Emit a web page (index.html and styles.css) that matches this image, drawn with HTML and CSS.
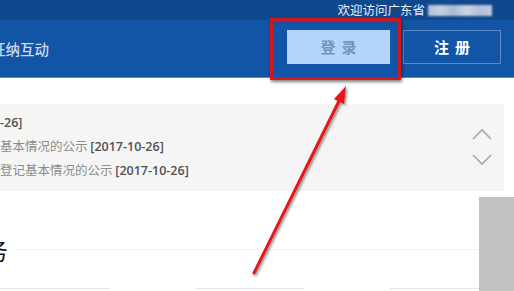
FILE: index.html
```html
<!DOCTYPE html>
<html lang="zh-CN">
<head>
<meta charset="utf-8">
<title>征纳互动</title>
<link rel="stylesheet" href="styles.css">
</head>
<body>
<div class="page">
  <div class="topbar">
    <span class="welcome">欢迎访问广东省</span>
    <span class="blurred"></span>
  </div>
  <div class="nav">
    <span class="nav-title">征纳互动</span>
    <div class="nav-actions">
      <a class="btn btn-login">登录</a>
      <a class="btn btn-register">注册</a>
    </div>
  </div>
  <div class="notice">
    <ul class="notice-list">
      <li><span class="date">-26]</span></li>
      <li>基本情况的公示 <span class="date">[2017-10-26]</span></li>
      <li>登记基本情况的公示 <span class="date">[2017-10-26]</span></li>
    </ul>
    <div class="notice-arrows">
      <svg class="chev" width="20" height="12" viewBox="0 0 20 12"><path d="M1 11 L10 2 L19 11" /></svg>
      <svg class="chev" width="20" height="12" viewBox="0 0 20 12"><path d="M1 1 L10 10 L19 1" /></svg>
    </div>
  </div>
  <div class="section">
    <h2 class="section-title">务</h2>
    <div class="section-rule"></div>
  </div>
  <div class="cards">
    <div class="card"></div>
    <div class="card"></div>
    <div class="card"></div>
  </div>
  <div class="side-block"></div>
  <div class="highlight-box"></div>
  <svg class="annot-arrow" width="514" height="291" viewBox="0 0 514 291">
    <defs>
      <filter id="sh" x="-20%" y="-20%" width="140%" height="140%">
        <feDropShadow dx="1.5" dy="1.5" stdDeviation="1" flood-color="#000" flood-opacity="0.45"/>
      </filter>
    </defs>
    <g filter="url(#sh)">
      <line x1="254" y1="273" x2="340" y2="99" stroke="#e8141c" stroke-width="3" stroke-linecap="round"/>
      <polygon points="346,86 344,104 334,99" fill="#e8141c"/>
    </g>
  </svg>
</div>
</body>
</html>
```

FILE: styles.css
```css
* { box-sizing: border-box; }
html, body { margin: 0; padding: 0; }
body {
  width: 514px;
  height: 291px;
  overflow: hidden;
  background: #ffffff;
  font-family: "Noto Sans CJK SC", "Noto Sans", sans-serif;
}
.page {
  position: relative;
  width: 514px;
  height: 291px;
  overflow: hidden;
}
.topbar {
  height: 20px;
  background: #10488e;
  display: flex;
  align-items: center;
  justify-content: flex-end;
  padding-right: 22px;
}
.welcome {
  color: #e8eef8;
  font-size: 12.5px;
  line-height: 20px;
}
.blurred {
  width: 64px;
  height: 11px;
  margin-left: 3px;
  background: linear-gradient(90deg, #aebfd8 0%, #c6d0e0 20%, #a9bad4 40%, #cdd5e3 60%, #b2c1d9 80%, #c0cbdd 100%);
  filter: blur(1px);
}
.nav {
  height: 58px;
  background: #1254a5;
  border-bottom: 1px solid #5d87c0;
  display: flex;
  align-items: center;
  justify-content: space-between;
  padding-right: 13px;
}
.nav-title {
  margin-left: -9px;
  color: #cdd9ec;
  font-size: 14.5px;
  font-weight: 500;
}
.nav-actions {
  display: flex;
  gap: 13px;
  margin-top: -4px;
}
.btn {
  display: flex;
  align-items: center;
  justify-content: center;
  height: 34px;
  font-size: 15px;
  font-weight: 700;
  letter-spacing: 6px;
  text-indent: 6px;
}
.btn-login {
  width: 103px;
  background: #b4d5fb;
  color: #7592c0;
}
.btn-register {
  width: 98px;
  border: 1px solid #5a87c6;
  color: #ffffff;
}
.notice {
  margin-top: 26px;
  width: 504px;
  height: 87px;
  background: #f5f5f5;
  display: flex;
  justify-content: space-between;
  padding-right: 12px;
}
.notice-list {
  list-style: none;
  margin: 0;
  padding: 6px 0 0 0;
}
.notice-list li {
  height: 24px;
  line-height: 24px;
  font-size: 12.5px;
  color: #8c8c8c;
  white-space: nowrap;
}
.date {
  color: #505050;
  font-family: "Open Sans", "Noto Sans", sans-serif;
  font-weight: 600;
  font-size: 12.5px;
}
.notice-arrows {
  display: flex;
  flex-direction: column;
  gap: 14px;
  padding-top: 24px;
}
.chev path {
  fill: none;
  stroke: #a9a9a9;
  stroke-width: 1.6;
}
.section {
  display: flex;
  align-items: center;
  height: 97px;
  padding-top: 20px;
  padding-right: 36px;
}
.section-title {
  margin: 0 7px 0 -16px;
  font-size: 24px;
  font-weight: 400;
  line-height: 26px;
  color: #111111;
}
.section-rule {
  flex: 1;
  height: 1px;
  background: #f1f1f1;
}
.cards {
  display: flex;
  gap: 85px;
  padding-top: 0;
}
.card {
  width: 110px;
  height: 10px;
  border-top: 1px solid #e6e6e6;
}
.side-block {
  position: absolute;
  left: 479px;
  top: 197px;
  width: 35px;
  height: 94px;
  background: #c1c1c1;
}
.highlight-box {
  position: absolute;
  left: 270px;
  top: 18px;
  width: 131px;
  height: 62px;
  border: 3px solid #d6161e;
  box-shadow: 1px 2px 3px rgba(0, 0, 0, 0.5);
}
.annot-arrow {
  position: absolute;
  left: 0;
  top: 0;
  pointer-events: none;
}
```
